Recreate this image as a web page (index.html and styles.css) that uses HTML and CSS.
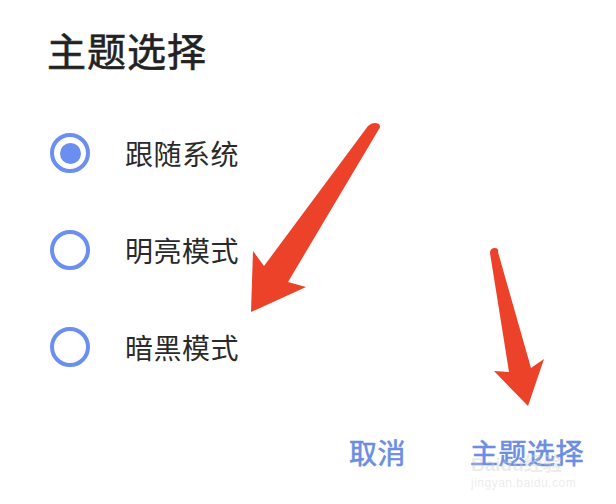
FILE: index.html
```html
<!DOCTYPE html>
<html lang="zh-CN">
<head>
    <meta charset="UTF-8">
    <title>主题选择</title>
    <link rel="stylesheet" href="styles.css">
</head>
<body>
    <div class="dialog">
        <h1 class="title">主题选择</h1>

        <div class="options">
            <div class="option">
                <span class="radio checked"></span>
                <span class="label">跟随系统</span>
            </div>
            <div class="option">
                <span class="radio"></span>
                <span class="label">明亮模式</span>
            </div>
            <div class="option">
                <span class="radio"></span>
                <span class="label">暗黑模式</span>
            </div>
        </div>

        <div class="actions">
            <span class="btn">取消</span>
            <span class="btn">主题选择</span>
        </div>
    </div>

    <!-- 标注箭头 -->
    <svg class="arrows" width="616" height="504" viewBox="0 0 616 504">
        <path fill="#eb4229" d="M368 126 Q373 121 379 124 Q381 127 379 129 L288 282 L306 287 L251 312 L253 251 L264 266 Z"/>
        <path fill="#eb4229" d="M490 253 Q490 248 495 248 Q499 248 498 252 L531 368 L544 359 L528 406 L494 371 L509 372 Z"/>
    </svg>

    <div class="watermark">
        <div class="wm-logo">Bai<span class="wm-paw">du</span>经验</div>
        <div class="wm-url">jingyan.baidu.com</div>
    </div>
</body>
</html>
```

FILE: styles.css
```css
* {
    margin: 0;
    padding: 0;
    box-sizing: border-box;
}

body {
    font-family: "Noto Sans CJK SC", "Noto Sans", sans-serif;
    background: #fff;
    width: 616px;
    height: 504px;
    overflow: hidden;
    position: relative;
}

.dialog {
    padding: 21px 30px 0 47px;
}

.title {
    font-size: 39px;
    font-weight: 400;
    -webkit-text-stroke: 0.6px #222;
    color: #222;
    line-height: 56px;
    letter-spacing: 1px;
}

.options {
    margin-top: 56px;
    margin-left: 3px;
    display: flex;
    flex-direction: column;
    gap: 57px;
}

.option {
    display: flex;
    align-items: center;
    height: 40px;
}

.radio {
    width: 40px;
    height: 40px;
    border: 4px solid #6a8ff0;
    border-radius: 50%;
    display: flex;
    align-items: center;
    justify-content: center;
    flex-shrink: 0;
}

.radio.checked::after {
    content: "";
    width: 21px;
    height: 21px;
    border-radius: 50%;
    background: #6a8ff0;
}

.label {
    margin-left: 35px;
    font-size: 28px;
    color: #2a2a2a;
    letter-spacing: 0.5px;
}

.actions {
    display: flex;
    justify-content: flex-end;
    gap: 64px;
    margin-top: 65px;
    padding-right: 2px;
}

.btn {
    font-size: 28px;
    font-weight: 400;
    -webkit-text-stroke: 0.6px #6b8de2;
    color: #6b8de2;
    letter-spacing: 0.5px;
}

.arrows {
    position: absolute;
    left: 0;
    top: 0;
}

.watermark {
    position: absolute;
    left: 471px;
    top: 454px;
    color: rgba(205, 205, 205, 0.4);
    font-family: "Liberation Sans", "Noto Sans CJK SC", sans-serif;
}

.wm-logo {
    font-size: 19px;
    font-weight: bold;
    line-height: 22px;
}

.wm-url {
    font-size: 12px;
    line-height: 14px;
    letter-spacing: 0.5px;
}
```
